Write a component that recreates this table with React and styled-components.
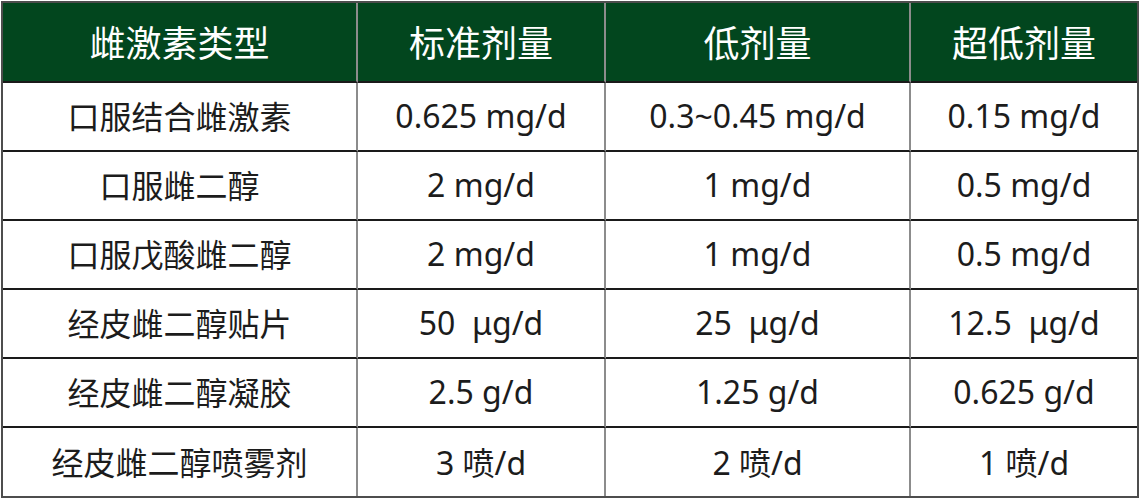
import styled, { createGlobalStyle } from 'styled-components'

const GlobalStyle = createGlobalStyle`
    html, body {
        margin: 0;
        padding: 0;
        background: #ffffff;
    }
    body {
        font-family: 'Noto Sans', 'Noto Sans CJK SC', sans-serif;
    }
`

const Table = styled.div`
    box-sizing: border-box;
    margin: 1px 0 0 1px;
    width: 1138px;
    border: 2px solid #4d4d4d;
    display: grid;
    grid-template-columns: 355px 248px 305px 1fr;
`

const Cell = styled.div`
    box-sizing: border-box;
    height: ${p => p.$head ? '80px' : p.$last ? '68px' : '69px'};
    display: flex;
    align-items: center;
    justify-content: center;
    white-space: pre;
    border-right: ${p => p.$end ? 'none' : '2px solid #8c8c8c'};
    border-bottom: ${p => p.$last ? 'none' : '2px solid #1a1a1a'};
    background: ${p => p.$head ? '#02461e' : '#ffffff'};
    color: ${p => p.$head ? '#ffffff' : '#1c1c1c'};
    font-size: ${p => p.$head ? '36px' : '32px'};
    padding-bottom: ${p => p.$head ? '1px' : '3px'};
`

const header = ['雌激素类型', '标准剂量', '低剂量', '超低剂量']

const rows = [
    ['口服结合雌激素', '0.625 mg/d', '0.3~0.45 mg/d', '0.15 mg/d'],
    ['口服雌二醇', '2 mg/d', '1 mg/d', '0.5 mg/d'],
    ['口服戊酸雌二醇', '2 mg/d', '1 mg/d', '0.5 mg/d'],
    ['经皮雌二醇贴片', '50  μg/d', '25  μg/d', '12.5  μg/d'],
    ['经皮雌二醇凝胶', '2.5 g/d', '1.25 g/d', '0.625 g/d'],
    ['经皮雌二醇喷雾剂', '3 喷/d', '2 喷/d', '1 喷/d'],
]

export default function App() {
    return (
        <>
            <GlobalStyle />
            <Table>
                {header.map((h, i) => (
                    <Cell key={h} $head $end={i === 3}>{h}</Cell>
                ))}
                {rows.map((row, r) => row.map((v, i) => (
                    <Cell key={r + '-' + i} $end={i === 3} $last={r === rows.length - 1}>{v}</Cell>
                )))}
            </Table>
        </>
    )
}
